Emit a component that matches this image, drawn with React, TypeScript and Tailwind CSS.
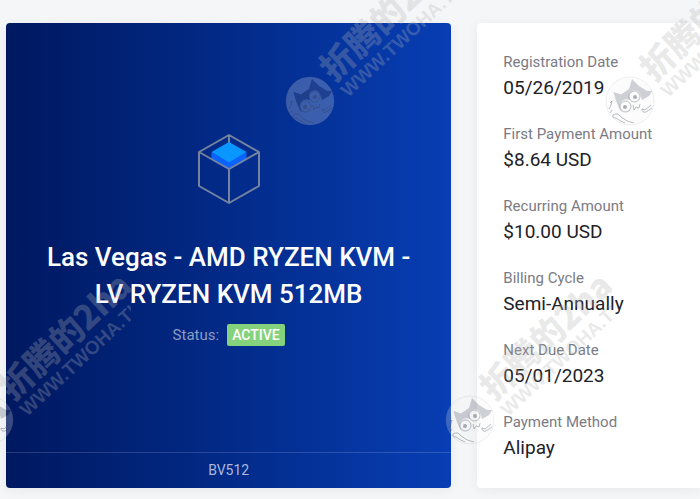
const details = [
  { label: "Registration Date", value: "05/26/2019" },
  { label: "First Payment Amount", value: "$8.64 USD" },
  { label: "Recurring Amount", value: "$10.00 USD" },
  { label: "Billing Cycle", value: "Semi-Annually" },
  { label: "Next Due Date", value: "05/01/2023" },
  { label: "Payment Method", value: "Alipay" },
];

const stamps = [
  { x: 310, y: 101 },
  { x: 630, y: 101 },
  { x: -11, y: 420 },
  { x: 470, y: 420 },
];

function ProductIcon() {
  return (
    <svg width="62" height="70" viewBox="0 0 62 70" fill="none" aria-hidden="true">
      <path d="M31 1v17" stroke="#74839f" strokeWidth="2" />
      <path d="M13.500 18 31 28v8L13.500 26z" fill="#0a62ff" />
      <path d="M48.500 18 31 28v8l17.500-10z" fill="#0a62ff" />
      <path d="M31 8 48.500 18 31 28.500 13.500 18z" fill="#0a96ff" />
      <path
        d="M31 1 61 18v34L31 69 1 52V18zM1 18l30 17 30-17M31 35v34"
        stroke="#74839f"
        strokeWidth="2"
        strokeLinejoin="round"
      />
    </svg>
  );
}

function Stamp({ x, y }: { x: number; y: number }) {
  return (
    <g transform={`translate(${x} ${y})`}>
      <path
        fill="#f4f4f4"
        fillOpacity="0.23"
        fillRule="evenodd"
        d="M-24 0a24 24 0 1 0 48 0a24 24 0 1 0-48 0zM-16.500-9-9-6.500Q-4-10-1-12L2-22 9-15Q14-12 17-10L22-10 19-5 12-1Q10-11 5-11-1-10-1-5-1-3 0-1-5-3-8 0-12 4-9 9L-8 12Q-13 5-16.500-9z"
      />
      <circle r="24" fill="none" stroke="#808080" strokeOpacity="0.12" />
      <path
        fill="#5c6474"
        fillOpacity="0.3"
        d="M-16.500-9-9-6.500Q-4-10-1-12L2-22 9-15Q14-12 17-10L22-10 19-5 12-1Q10-11 5-11-1-10-1-5-1-3 0-1-5-3-8 0-12 4-9 9L-8 12Q-13 5-16.500-9z"
      />
      <g fill="none" stroke="#303848" strokeOpacity="0.32" strokeWidth="1">
        <circle cx="4.500" cy="-4.500" r="5.500" />
        <circle cx="-4.500" cy="5.500" r="5.500" />
        <path d="M3 4 4 9 6 6 9 7 10 3M-17 14Q-12 11-9 16 -3 21 4 22M-17 14Q-18 17-14 17 -10 20-5 22M12 8Q12 12 16 11L22 7M12 8l3 1 6-5M-20 2l2-2-1 4-2 4M-18 9l-2 3" />
      </g>
      <g fill="#303848" fillOpacity="0.4">
        <circle cx="5" cy="-4" r="2" />
        <circle cx="-5" cy="6" r="2" />
      </g>
      <svg x="0" y="-150" width="142" height="190" overflow="hidden">
        <g transform="translate(0 150) rotate(-43)" fill="#b4b4b4" fillOpacity="0.28">
          <text x="30" y="3" className="font-['Noto_Sans_CJK_SC',sans-serif] text-[34px] font-black">
            折腾的2ha
          </text>
          <text x="30" y="24" className="font-['Liberation_Sans',sans-serif] text-[19px] font-bold">
            WWW.TWOHA.TK
          </text>
        </g>
      </svg>
    </g>
  );
}

export default function App() {
  return (
    <main className="relative overflow-hidden bg-[#f5f6f8] pt-[23px] pb-[11px] pl-1.5 font-[Roboto,sans-serif]">
      <div className="grid grid-cols-[2fr_1fr] gap-[26px]">
        <section className="flex flex-col overflow-hidden rounded bg-linear-to-r from-[#001860] to-[#083eb4] text-center shadow-[0_2px_12px_rgba(0,0,0,0.06)]">
          <div className="flex flex-1 flex-col items-center justify-center px-8 pt-1.5">
            <ProductIcon />
            <h1 className="mt-[35px] text-[26px] leading-[37px] font-medium text-white">
              Las Vegas - AMD RYZEN KVM - LV RYZEN KVM 512MB
            </h1>
            <p className="mt-2.5 flex items-center gap-2 text-[15px] leading-6 text-[#8c9cc4]">
              Status:
              <span className="rounded-xs bg-[#84d27c] px-[5px] text-sm leading-[22px] font-medium text-white">
                ACTIVE
              </span>
            </p>
          </div>
          <footer className="border-t border-white/15 text-sm leading-[35px] text-[#a9b8dc]">BV512</footer>
        </section>
        <section className="rounded-l bg-white pt-[27px] pb-[26px] pl-[26px] shadow-[0_2px_12px_rgba(0,0,0,0.06)]">
          <dl className="flex flex-col gap-5">
            {details.map((item) => (
              <div key={item.label}>
                <dt className="text-[15px] leading-6 text-[#7b7b84]">{item.label}</dt>
                <dd className="text-[19px] leading-7 text-[#212127]">{item.value}</dd>
              </div>
            ))}
          </dl>
        </section>
      </div>
      <svg className="pointer-events-none absolute inset-0 size-full" aria-hidden="true">
        {stamps.map((stamp) => (
          <Stamp key={`${stamp.x}-${stamp.y}`} x={stamp.x} y={stamp.y} />
        ))}
      </svg>
    </main>
  );
}
